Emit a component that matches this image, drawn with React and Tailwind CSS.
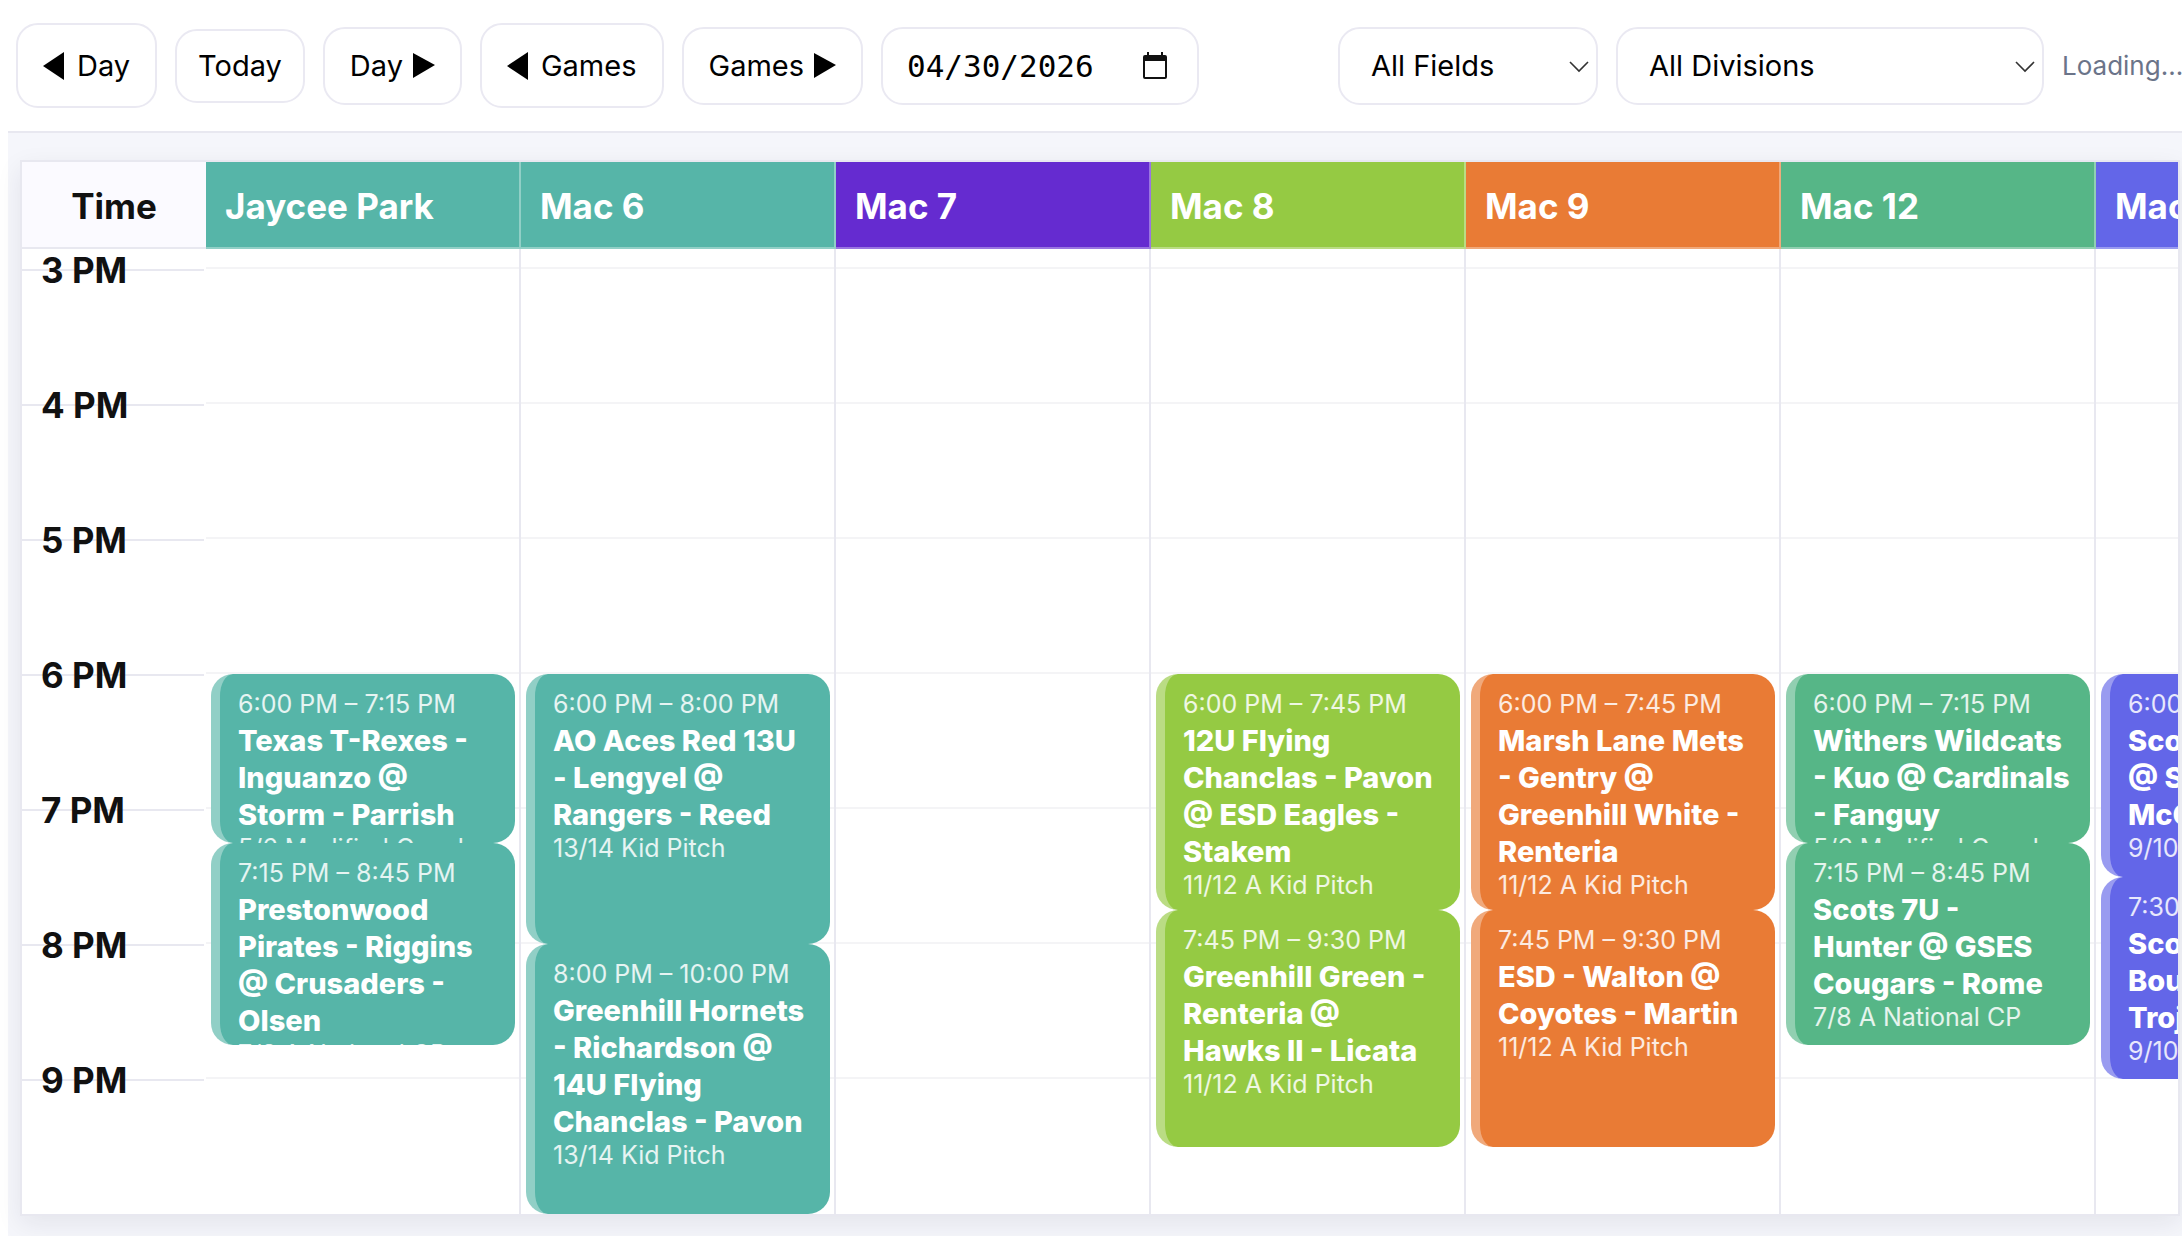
const HOUR = 135;
const TOP = 20;
const HOURS = [3, 4, 5, 6, 7, 8, 9];

const FIELDS = [
  {
    name: "Jaycee Park",
    color: "bg-[#56b5a8]",
    games: [
      { start: 18, end: 19.25, time: "6:00 PM – 7:15 PM", title: "Texas T-Rexes - Inguanzo @ Storm - Parrish", division: "5/6 Modified Coach" },
      { start: 19.25, end: 20.75, time: "7:15 PM – 8:45 PM", title: "Prestonwood Pirates - Riggins @ Crusaders - Olsen", division: "7/8 A National CP" },
    ],
  },
  {
    name: "Mac 6",
    color: "bg-[#56b5a8]",
    games: [
      { start: 18, end: 20, time: "6:00 PM – 8:00 PM", title: "AO Aces Red 13U -\u00a0Lengyel @ Rangers - Reed", division: "13/14 Kid Pitch" },
      { start: 20, end: 22, time: "8:00 PM – 10:00 PM", title: "Greenhill Hornets - Richardson @ 14U Flying Chanclas - Pavon", division: "13/14 Kid Pitch" },
    ],
  },
  { name: "Mac 7", color: "bg-[#652bd0]", games: [] },
  {
    name: "Mac 8",
    color: "bg-[#95ca43]",
    games: [
      { start: 18, end: 19.75, time: "6:00 PM – 7:45 PM", title: "12U Flying Chanclas - Pavon @ ESD Eagles - Stakem", division: "11/12 A Kid Pitch" },
      { start: 19.75, end: 21.5, time: "7:45 PM – 9:30 PM", title: "Greenhill Green - Renteria @ Hawks\u00a0II - Licata", division: "11/12 A Kid Pitch" },
    ],
  },
  {
    name: "Mac 9",
    color: "bg-[#e97b35]",
    games: [
      { start: 18, end: 19.75, time: "6:00 PM – 7:45 PM", title: "Marsh Lane Mets - Gentry @ Greenhill White - Renteria", division: "11/12 A Kid Pitch" },
      { start: 19.75, end: 21.5, time: "7:45 PM – 9:30 PM", title: "ESD - Walton @ Coyotes - Martin", division: "11/12 A Kid Pitch" },
    ],
  },
  {
    name: "Mac 12",
    color: "bg-[#56b687]",
    games: [
      { start: 18, end: 19.25, time: "6:00 PM – 7:15 PM", title: "Withers Wildcats - Kuo @ Cardinals - Fanguy", division: "5/6 Modified Coach" },
      { start: 19.25, end: 20.75, time: "7:15 PM – 8:45 PM", title: "Scots 7U - Hunter\u00a0@ GSES Cougars - Rome", division: "7/8 A National CP" },
    ],
  },
  {
    name: "Mac 13",
    color: "bg-[#6366e8]",
    games: [
      { start: 18, end: 19.5, time: "6:00 PM – 7:30 PM", title: "Scots - Patterson @\u00a0Sluggers - McCormick", division: "9/10 A Kid Pitch" },
      { start: 19.5, end: 21, time: "7:30 PM – 9:00 PM", title: "Scots Blue 9U - Bouchard\u00a0@ Trojans\u00a0- Lee", division: "9/10 A Kid Pitch" },
    ],
  },
];

function Triangle({ left }) {
  return (
    <svg width="22" height="28" viewBox="0 0 22 28" fill="currentColor" aria-hidden="true" className="shrink-0">
      <path d={left ? "M21 0V28L0 14Z" : "M0 1V26L22 13Z"} />
    </svg>
  );
}

function ToolButton({ className, children }) {
  return (
    <button type="button" className={`flex shrink-0 items-center rounded-[22px] border-2 border-[#eae9f2] bg-white whitespace-nowrap ${className}`}>
      {children}
    </button>
  );
}

function Dropdown({ label, className }) {
  return (
    <div className={`relative flex h-[78px] shrink-0 ${className}`}>
      <select aria-label={label} className="w-full appearance-none rounded-[22px] border-2 border-[#eae9f2] bg-white pl-[31px]">
        <option>{label}</option>
      </select>
      <svg width="20" height="12" viewBox="0 0 20 12" fill="none" stroke="#333" strokeWidth="1.6" aria-hidden="true" className="pointer-events-none absolute right-[9px] top-[34px]">
        <path d="M1 1L10 10L19 1" />
      </svg>
    </div>
  );
}

function Toolbar() {
  return (
    <header className="ml-2 flex h-[133px] items-center overflow-hidden border-b-2 border-[#e8e8f0] pl-2 text-[29px] leading-9 text-black">
      <div className="flex grow items-center gap-[18px]">
        <ToolButton className="h-[85px] gap-3 px-[25px]"><Triangle left />Day</ToolButton>
        <ToolButton className="h-[74px] px-[21px]">Today</ToolButton>
        <ToolButton className="h-[78px] gap-2.5 px-[25px]">Day<Triangle /></ToolButton>
        <ToolButton className="h-[85px] gap-3 px-[25px]"><Triangle left />Games</ToolButton>
        <ToolButton className="h-[78px] gap-2.5 px-[25px]">Games<Triangle /></ToolButton>
        <div className="relative flex h-[78px] w-[318px] shrink-0">
          <input aria-label="Date" defaultValue="04/30/2026" className="w-full rounded-[22px] border-2 border-[#eae9f2] bg-white pl-6 font-['DejaVu_Sans_Mono',monospace] text-[31px]" />
          <svg width="24" height="28" viewBox="0 0 24 28" aria-hidden="true" className="pointer-events-none absolute right-8 top-[25px]">
            <path d="M4 0H6V3H18V0H20V3H22Q24 3 24 5V25Q24 27 22 27H2Q0 27 0 25V5Q0 3 2 3H4ZM2 9V25H22V9Z" fill="#111" fillRule="evenodd" />
          </svg>
        </div>
      </div>
      <div className="flex shrink-0 items-center gap-[18px]">
        <Dropdown label="All Fields" className="w-[260px]" />
        <Dropdown label="All Divisions" className="w-[428px]" />
        <span className="w-[120px] text-[26px] text-[#6b7489] whitespace-nowrap">Loading...</span>
      </div>
    </header>
  );
}

function Game({ game, color }) {
  return (
    <article
      className={`absolute left-[5px] right-[4px] overflow-hidden rounded-[22px] border-l-[9px] border-white/35 bg-origin-border pl-[18px] pr-[18px] pt-3 text-white ${color}`}
      style={{ top: TOP + (game.start - 15) * HOUR, height: (game.end - game.start) * HOUR }}
    >
      <p className="text-[25px] leading-9 whitespace-nowrap text-white/85">{game.time}</p>
      <h3 className="text-[29px] leading-[37px] font-extrabold">{game.title}</h3>
      <p className="text-[25px] leading-[30px] whitespace-nowrap text-white/85">{game.division}</p>
    </article>
  );
}

export default function App() {
  return (
    <div className="min-h-screen overflow-hidden bg-white font-['Inter',sans-serif] text-[#111]">
      <Toolbar />
      <main className="ml-2 min-h-[1103px] bg-[#f5f6fb] pt-[27px] pr-[2px] pl-3">
        <div className="overflow-hidden border-2 border-[#e8e8f0] bg-white shadow-[0_8px_24px_rgba(20,20,50,0.08)]">
          <div className="flex h-[87px] text-[35px] font-bold">
            <div className="flex w-[184px] shrink-0 items-center justify-center border-b-2 border-[#e8e8f0] bg-[#fbfaff] pt-1">Time</div>
            {FIELDS.map((f) => (
              <div key={f.name} className={`flex w-[315px] shrink-0 items-center border-r-2 border-b-2 border-white/35 pl-[19px] pt-1 text-white ${f.color}`}>{f.name}</div>
            ))}
          </div>
          <div className="flex h-[965px]">
            <div className="w-[182px] mr-[2px] shrink-0 pt-5">
              {HOURS.map((h) => (
                <div key={h} className="h-[135px] border-t-2 border-[#e8e8f0]">
                  <div className="-mt-[22px] pl-[19px] text-[35px] leading-[42px] font-bold">{h} PM</div>
                </div>
              ))}
            </div>
            {FIELDS.map((f) => (
              <div key={f.name} className="relative w-[315px] shrink-0 border-r-2 border-[#e8e8f0] pt-[18px]">
                {HOURS.map((h) => (
                  <div key={h} className="h-[135px] border-t-2 border-[#f4f4f6]" />
                ))}
                {f.games.map((g) => (
                  <Game key={g.time} game={g} color={f.color} />
                ))}
              </div>
            ))}
          </div>
        </div>
      </main>
    </div>
  );
}
